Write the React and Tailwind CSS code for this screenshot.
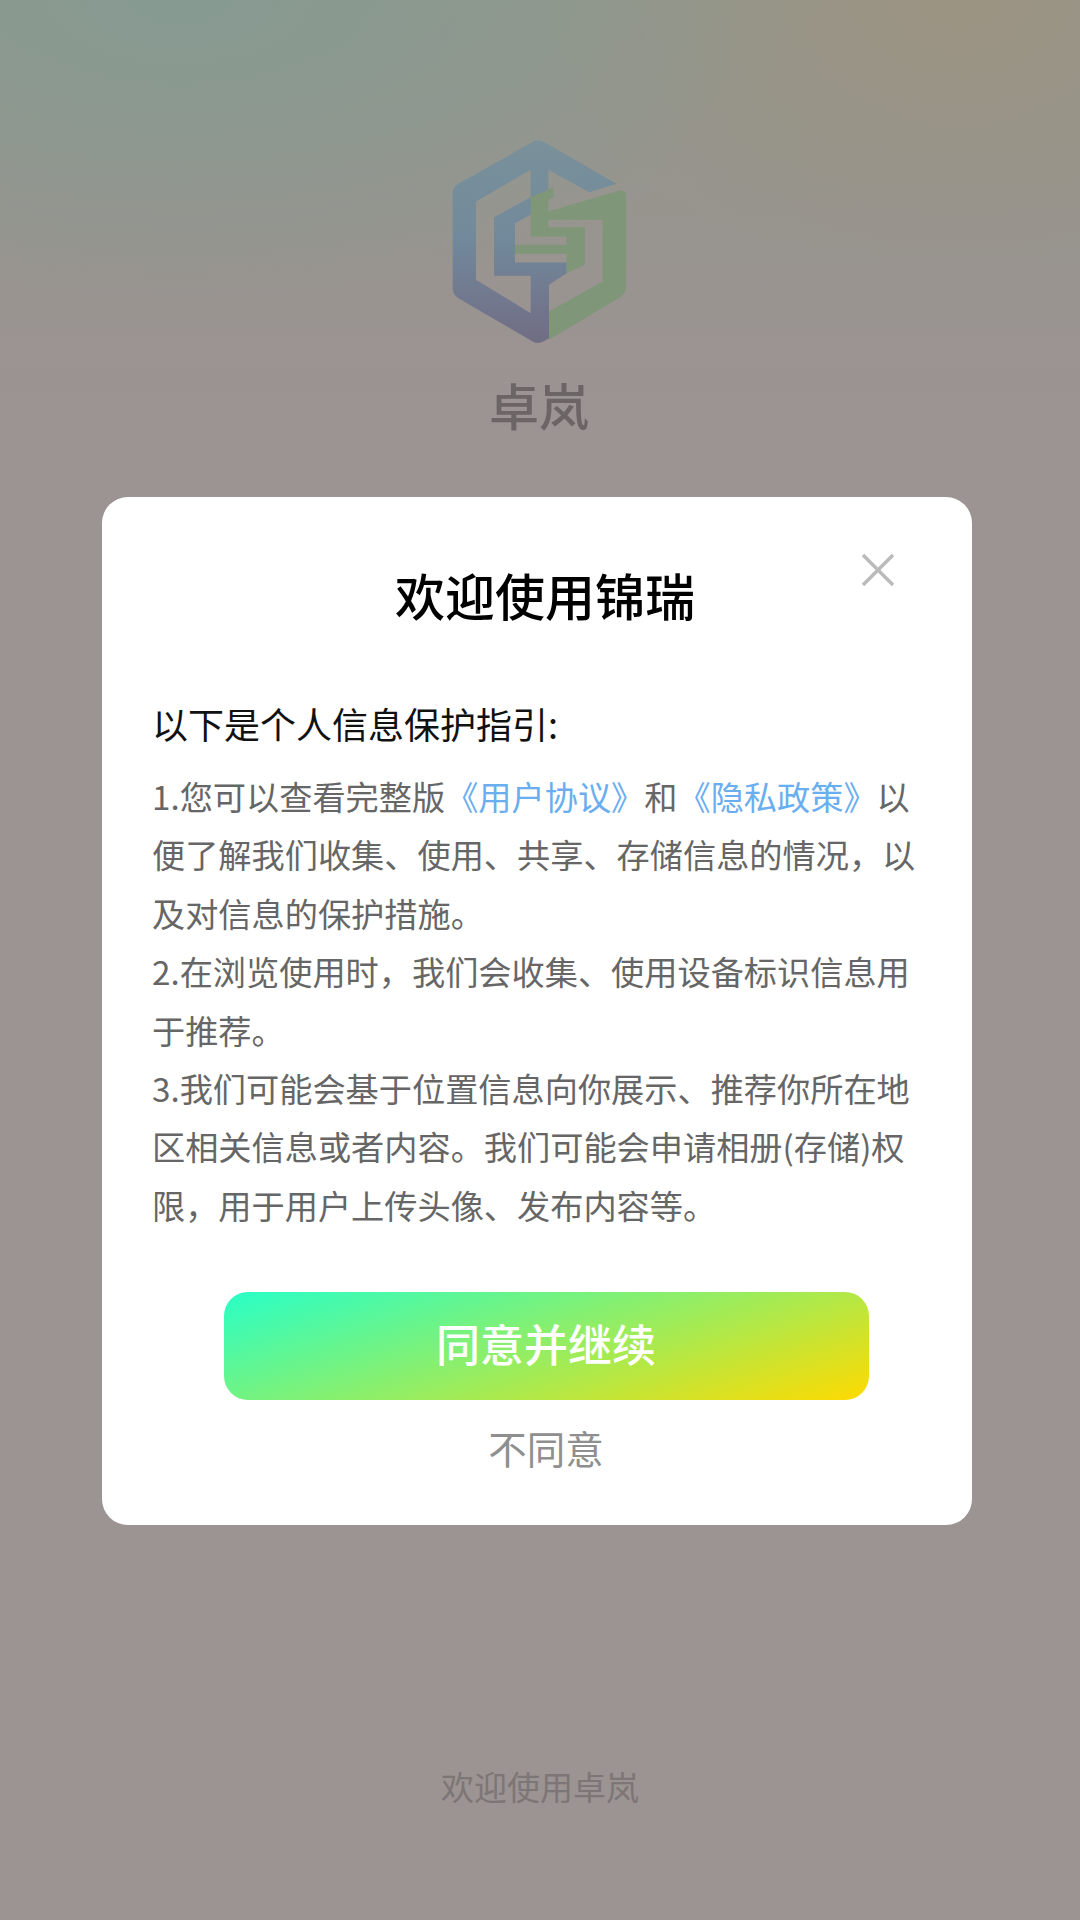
export default function App() {
  const font = { fontFamily: '"Noto Sans CJK SC", "Noto Sans", sans-serif' };
  return (
    <div style={font} className="relative flex h-[1920px] w-[1080px] flex-col items-center overflow-hidden bg-[#9c9393] bg-[radial-gradient(ellipse_620px_300px_at_180px_0px,#869a91_0%,rgba(134,154,145,0)_100%),radial-gradient(ellipse_420px_280px_at_960px_0px,#9b9382_0%,rgba(155,147,130,0)_100%),linear-gradient(180deg,#93968b_0px,#9c9393_420px)]">
      <svg className="mt-[138px] ml-[-1px] block" width="180" height="207" viewBox="150 85 540 620">
        <defs>
          <linearGradient id="blue" x1="0" y1="90" x2="0" y2="700" gradientUnits="userSpaceOnUse">
            <stop offset="0" stopColor="#7a919b" />
            <stop offset="0.5" stopColor="#71899a" />
            <stop offset="0.75" stopColor="#727a90" />
            <stop offset="1" stopColor="#706d84" />
          </linearGradient>
        </defs>
        <path fill="url(#blue)" fillRule="evenodd" d="M400 95 Q415 87 430 95 L650 222 L568 247 L445 180 L445 270 L392 315 L345 340 L345 458 L500 458 L500 490 L447 525 L447 685 Q415 707 398 695 L175 565 Q158 553 158 535 L158 250 Q158 232 175 222 Z M392 180 L228 275 L228 510 L392 610 L392 498 L282 498 L282 322 L392 262 Z" />
        <path fill="#7f9678" d="M392 262 L460 232 L460 262 L445 270 L445 305 L660 242 Q678 242 678 258 L678 530 Q678 550 660 562 L447 690 L447 605 L608 515 L608 330 L445 330 L445 352 L555 352 L555 465 L500 490 L500 432 L345 432 L345 405 L500 405 L500 380 L392 380 Z" />
      </svg>
      <div className="mt-[24px] ml-[-2px] text-[50px] leading-[70px] font-medium text-[#6b6565]">卓岚</div>

      <div className="absolute top-[497px] left-[102px] flex h-[1028px] w-[870px] flex-col items-center rounded-[26px] bg-white">
        <svg className="absolute top-[57px] left-[760px]" width="32" height="32" viewBox="0 0 32 32">
          <path d="M1 1 L31 31 M31 1 L1 31" stroke="#bbbbbb" strokeWidth="3.5" fill="none" />
        </svg>
        <h1 className="mt-[60px] ml-[16px] text-[50px] leading-[74px] font-medium text-black">欢迎使用锦瑞</h1>
        <div className="mt-[65px] w-full pl-[50px] pr-[40px]">
          <p className="text-[36px] leading-[54px] text-[#111]">以下是个人信息保护指引:</p>
          <div className="mt-[17px] text-[33.2px] leading-[58.4px] text-[#666]">
            <p>1.您可以查看完整版<span className="text-[#6aaef0]">《用户协议》</span>和<span className="text-[#6aaef0]">《隐私政策》</span>以</p>
            <p>便了解我们收集、使用、共享、存储信息的情况，以</p>
            <p>及对信息的保护措施。</p>
            <p>2.在浏览使用时，我们会收集、使用设备标识信息用</p>
            <p>于推荐。</p>
            <p>3.我们可能会基于位置信息向你展示、推荐你所在地</p>
            <p>区相关信息或者内容。我们可能会申请相册(存储)权</p>
            <p>限，用于用户上传头像、发布内容等。</p>
          </div>
        </div>
        <button className="mt-[58px] ml-[18px] flex h-[108px] w-[645px] items-center justify-center rounded-[24px] bg-[linear-gradient(162deg,#28ffc8_0%,#a8ea50_60%,#ffda00_100%)] pb-[6px] text-[44px] font-medium text-white">同意并继续</button>
        <div className="mt-[19px] ml-[18px] text-[38.5px] leading-[56px] text-[#8f8f8f]">不同意</div>
      </div>

      <div className="absolute top-[1761px] left-0 w-full text-center text-[33px] leading-[50px] text-[#7d7676]">欢迎使用卓岚</div>
    </div>
  );
}
